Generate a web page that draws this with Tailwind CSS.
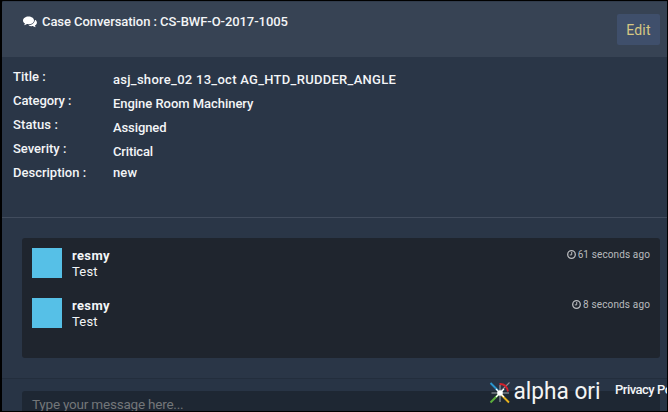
<!DOCTYPE html>
<html lang="en">
<head>
<meta charset="utf-8">
<title>Case Conversation</title>
<script src="https://cdn.jsdelivr.net/npm/@tailwindcss/browser@4"></script>
</head>
<body class="w-[668px] h-[412px] overflow-hidden bg-black font-['Roboto','Liberation_Sans',sans-serif] text-[13px] leading-4 text-[#f3f5f7] font-medium">
<main class="relative ml-[2px] mt-px w-[665px] h-[410px] overflow-hidden bg-[#2a3647] rounded-tl-[2px] whitespace-nowrap">
  <header class="h-14 bg-[#374354] border-t border-[#303b4b] flex justify-between pl-[21px] pr-[7px]">
    <h1 class="flex items-center h-4 mt-3">
      <svg class="w-[14px] h-[12px] mr-[5px]" viewBox="0 0 14 12" fill="#fff"><path d="M5.5.5C2.5.5 0 2.200 0 4.500c0 1.300.8 2.400 2 3.100-.2.8-.7 1.300-1.100 1.700 1.300-.1 2.300-.6 3.100-1.200.5.1 1 .1 1.500.1 3 0 5.500-1.600 5.500-3.800S8.500.5 5.500.5z"/><path d="M11.900 3.400c.1 3.400-2.800 5.700-6.400 5.900 1 .7 2.700 1.100 4.200.8.900.7 2 1.100 3.200 1.200-.5-.5-.9-1-1-1.700 2.600-1.400 2.800-4.500 0-6.200z"/></svg>
      <span class="tracking-[-0.06px]">Case Conversation : CS-BWF-O-2017-1005</span>
    </h1>
    <button class="mt-3 w-[43px] h-[31px] rounded-[2px] bg-[#3f4f6b] text-[#d5c783] text-[14px] font-normal tracking-[0.2px]">Edit</button>
  </header>
  <section class="h-[161px] border-b border-[#414c5d] pt-3 pl-[11px]">
    <dl class="grid grid-cols-[100px_1fr] auto-rows-[24px]">
      <dt><span class="tracking-[0.05px]">Title :</span></dt><dd class="pt-[3px]"><span class="tracking-[0.28px]">asj_shore_02 13_oct AG_HTD_RUDDER_ANGLE</span></dd>
      <dt><span class="tracking-[-0.1px]">Category :</span></dt><dd class="pt-[3px]"><span class="tracking-[-0.04px]">Engine Room Machinery</span></dd>
      <dt><span class="tracking-[0.1px]">Status :</span></dt><dd class="pt-[3px]"><span class="tracking-[-0.1px]">Assigned</span></dd>
      <dt><span class="tracking-[0px]">Severity :</span></dt><dd class="pt-[3px]"><span class="tracking-[-0.15px]">Critical</span></dd>
      <dt><span class="tracking-[0px]">Description :</span></dt><dd><span class="tracking-[0.1px]">new</span></dd>
    </dl>
  </section>
  <section class="h-[160px] pt-5 pl-5 pr-[7px]">
    <div class="h-[120px] rounded-[3px] bg-[#1f252e] p-[10px]">
      <article class="flex h-[50px]">
        <div class="w-[30px] h-[30px] bg-[#56c0e7] mr-[10px]"></div>
        <div class="flex-1"><p class="font-bold tracking-[0.35px]">resmy</p><p class="font-normal tracking-[0.2px]">Test</p></div>
        <time class="flex h-[13px] items-center text-[10px] font-normal text-[#b9bbbe] tracking-[0.12px]"><svg class="w-[9px] h-[9px] mr-[2px]" viewBox="0 0 9 9" fill="none" stroke="currentColor"><circle cx="4.500" cy="4.500" r="3.800" stroke-width="1.300"/><path d="M4.700 2v2.900H2.800"/></svg>61 seconds ago</time>
      </article>
      <article class="flex h-[50px]">
        <div class="w-[30px] h-[30px] bg-[#56c0e7] mr-[10px]"></div>
        <div class="flex-1"><p class="font-bold tracking-[0.35px]">resmy</p><p class="font-normal tracking-[0.2px]">Test</p></div>
        <time class="flex h-[13px] items-center text-[10px] font-normal text-[#b9bbbe] tracking-[0.15px]"><svg class="w-[9px] h-[9px] mr-[2px]" viewBox="0 0 9 9" fill="none" stroke="currentColor"><circle cx="4.500" cy="4.500" r="3.800" stroke-width="1.300"/><path d="M4.700 2v2.900H2.800"/></svg>8 seconds ago</time>
      </article>
    </div>
  </section>
  <section class="h-10 border-t border-[#232e3d] bg-[#283445] pt-3 pl-5 pr-[7px]">
    <div class="h-[31px] rounded-[3px] bg-[#1e2733] pl-[10px] pt-[5px] text-[13.5px] font-normal text-[#737679]"><span class="tracking-[-0.21px]">Type your message here...</span></div>
  </section>
  <footer class="absolute left-[486px] top-[378px] h-8 flex items-start">
    <svg class="w-[24px] h-[26px] mt-px" viewBox="0 0 24 26" fill="none">
      <path d="M2.500 3L10 10.500" stroke="#2a95cf" stroke-width="1.900"/><path d="M10 15L2.500 22.500" stroke="#5cae3c" stroke-width="1.900"/><path d="M13.500 15L21 22.500" stroke="#e8b21c" stroke-width="1.900"/><path d="M13 11L21.500 2.500" stroke="#8b9098" stroke-width="1.100"/>
      <path d="M11.500 4Q18.500 3.600 20 11.500" stroke="#d2202c" stroke-width="1.800"/>
      <path d="M12 5v17M3.500 13H21" stroke="#c8ccd1" stroke-width=".8"/><path d="M8 9l8 8M8 17l8-8" stroke="#fff" stroke-width="1.200"/><circle cx="12" cy="13" r="2.800" fill="#fff"/>
    </svg>
    <svg class="w-[90px] h-8 -ml-px" viewBox="0 0 90 32" role="img" aria-label="alpha ori"><text x="2.500" y="20" textLength="87" lengthAdjust="spacingAndGlyphs" fill="#f4f4f4" class="font-['Roboto',sans-serif] text-[23px] font-normal">alpha ori</text></svg>
    <span class="ml-[14px] mt-[3px] tracking-[-0.5px]">Privacy Policy</span>
  </footer>
</main>
</body>
</html>
